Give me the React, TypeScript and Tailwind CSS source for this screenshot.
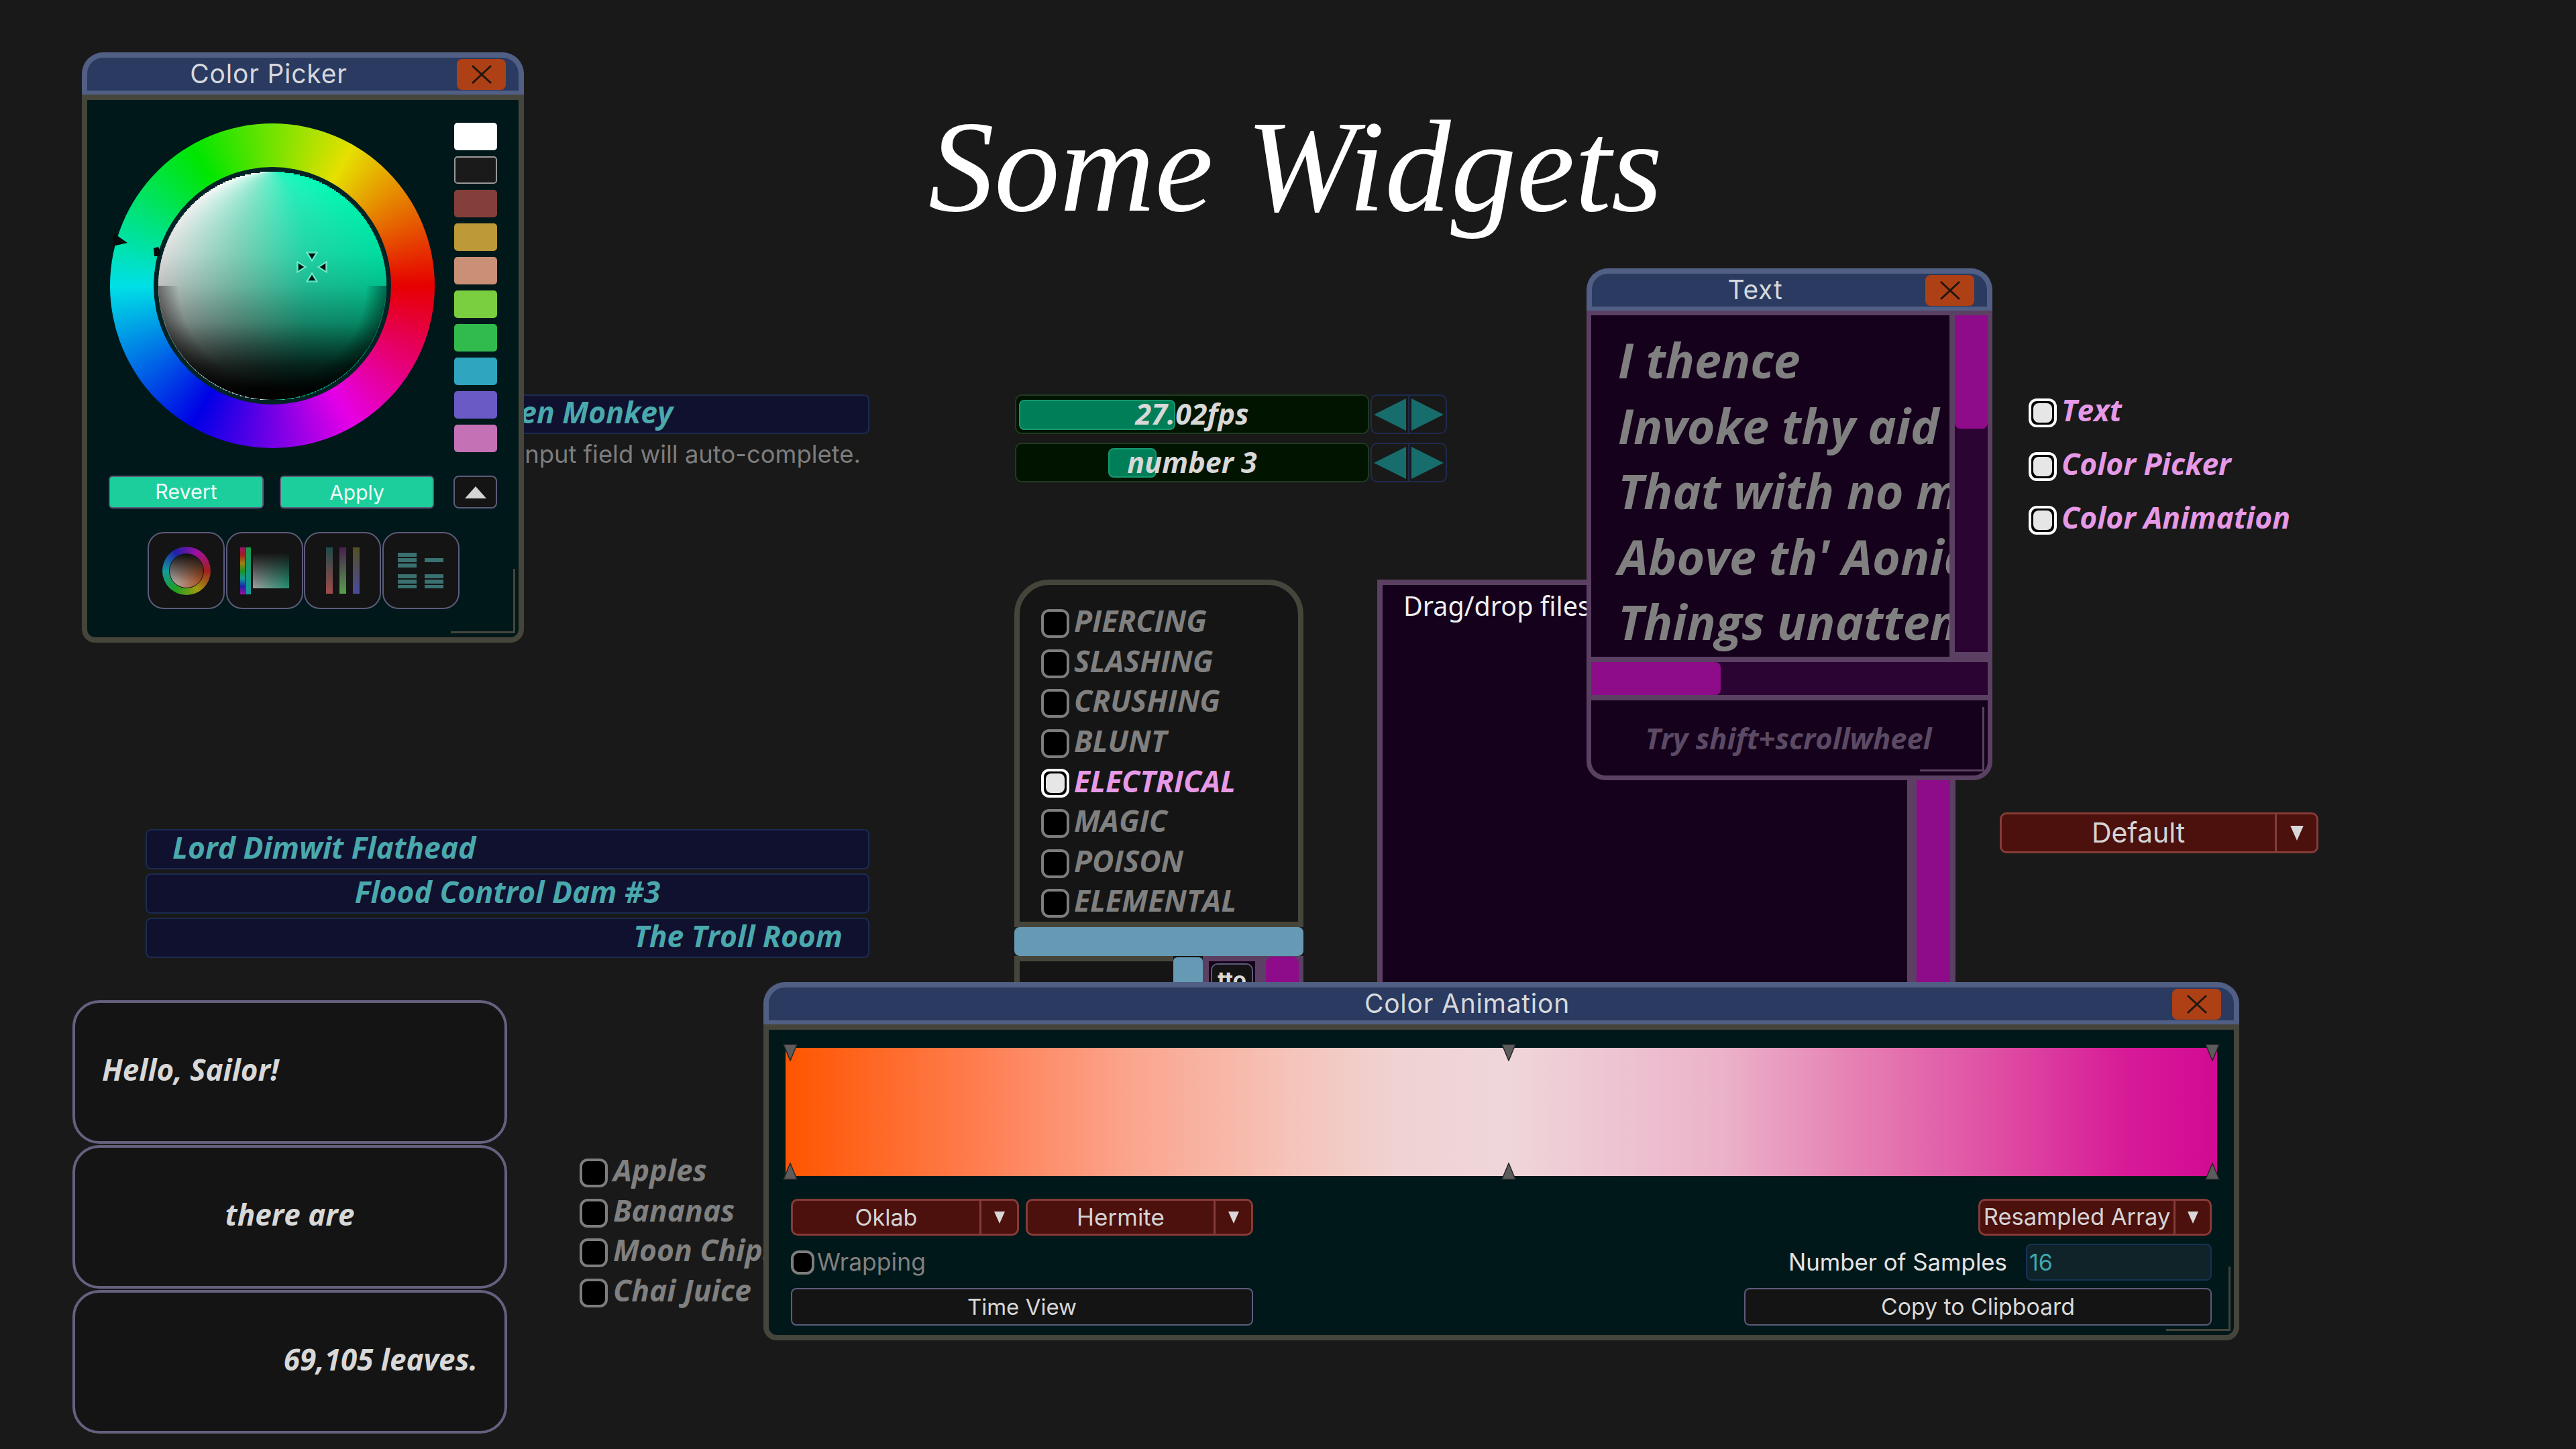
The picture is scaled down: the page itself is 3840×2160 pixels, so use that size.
import React from "react";

const bold = "font-['Open_Sans',sans-serif] font-bold italic";
const ui = "font-['Inter',sans-serif]";

function Close() {
  return (
    <div className="flex h-[46px] w-[73px] shrink-0 items-center justify-center rounded-[8px] bg-[#ae4016]">
      <svg width="32" height="30" viewBox="0 0 32 30">
        <path d="M2 2 L30 28 M30 2 L2 28" stroke="#20160f" strokeWidth="3" fill="none" />
      </svg>
    </div>
  );
}

function TitleBar({ title }: { title: string }) {
  return (
    <div className="flex h-[63px] shrink-0 items-center rounded-t-[32px] border-x-[8px] border-t-[8px] border-b-[6px] border-[#515f85] bg-[#2a3a60] pr-[19px]">
      <div className={`flex-1 pb-[3px] pr-[10px] text-center text-[39px] leading-none tracking-[0.02em] text-[#d6d8dc] ${ui}`}>{title}</div>
      <Close />
    </div>
  );
}

function Grip({ color }: { color: string }) {
  return (
    <>
      <div className="absolute bottom-[6px] right-[5px] h-[96px] w-[3px]" style={{ backgroundColor: color }} />
      <div className="absolute bottom-[6px] right-[5px] h-[3px] w-[96px]" style={{ backgroundColor: color }} />
    </>
  );
}

function Check({ on, small }: { on?: boolean; small?: boolean }) {
  const size = small ? "h-[36px] w-[35px]" : "h-[43px] w-[42px]";
  if (on)
    return (
      <div className={`${size} shrink-0 rounded-[12px] border-[4px] border-white bg-black p-[3px]`}>
        <div className="h-full w-full rounded-[8px] bg-[#e6e6e6]" />
      </div>
    );
  return <div className={`${size} shrink-0 rounded-[12px] border-[4px] border-[#7d7d7d] bg-black`} />;
}

function CheckRow({ label, on, gap }: { label: string; on?: boolean; gap?: string }) {
  return (
    <div className={`flex h-[43px] items-center ${gap ?? "gap-[7px]"}`}>
      <Check on={on} />
      <span className={`whitespace-nowrap pb-[8px] text-[44.4px] leading-none ${bold} ${on ? "text-[#e699e6]" : "text-[#808080]"}`}>{label}</span>
    </div>
  );
}

function Combo({ label, w, sep, size, big }: { label: string; w: string; sep: string; size: string; big?: boolean }) {
  const a = big ? 22 : 18;
  return (
    <div className={`flex h-full items-stretch rounded-[10px] border-[3px] border-[#853c36] bg-[#4c100d] text-[#d4d4d4] ${ui} ${w}`}>
      <div className={`flex flex-1 items-center justify-center whitespace-nowrap ${size} leading-none`}>{label}</div>
      <div className={`flex shrink-0 items-center justify-center border-l-[3px] border-[#853c36] ${sep}`}>
        <svg width={a} height={a} viewBox="0 0 18 18">
          <polygon points="1,0 17,0 9,18" fill="#d8d8d8" />
        </svg>
      </div>
    </div>
  );
}

function Stepper() {
  return (
    <div className="flex h-[59px] w-[114px] rounded-[10px] border-[2px] border-[#1e2b4f]">
      <div className="flex w-[56px] items-center justify-center border-r-[2px] border-[#1e2b4f]">
        <svg width="48" height="48" viewBox="0 0 48 48">
          <polygon points="0,24 48,0 48,48" fill="#176c6c" />
        </svg>
      </div>
      <div className="flex flex-1 items-center justify-center">
        <svg width="48" height="48" viewBox="0 0 48 48">
          <polygon points="48,24 0,0 0,48" fill="#176c6c" />
        </svg>
      </div>
    </div>
  );
}

function Slider({ text, fill }: { text: string; fill: string }) {
  return (
    <div className="flex gap-[2px]">
      <div className="relative flex h-[59px] w-[528px] items-center justify-center rounded-[10px] border-[2px] border-[#203a20] bg-[#001400]">
        <div className={`absolute rounded-[8px] border-[2px] border-[#159870] bg-[#007e58] ${fill}`} />
        <span className={`relative pb-[3px] text-[43px] leading-none text-[#d8d8d8] ${bold}`}>{text}</span>
      </div>
      <Stepper />
    </div>
  );
}

function Handle({ up, cls }: { up?: boolean; cls: string }) {
  return (
    <svg className={`absolute ${cls}`} width="22" height="26" viewBox="0 0 22 26">
      <polygon points={up ? "11,1 21,25 1,25" : "1,1 21,1 11,25"} fill="#5c5c5c" stroke="#262626" strokeWidth="1.5" />
    </svg>
  );
}

function Disc() {
  const r = 170;
  const rows = [];
  for (let y = -r; y < r; y += 2) {
    const w = Math.sqrt(Math.max(0, r * r - (y + 1) * (y + 1)));
    rows.push(<rect key={y} x={r - w} y={y + r} width={2 * w} height={2.5} fill="url(#svh)" />);
  }
  return (
    <svg width={340} height={340} viewBox="0 0 340 340">
      <defs>
        <linearGradient id="svh" x1="0" y1="0" x2="1" y2="0">
          <stop offset="0" stopColor="#ffffff" />
          <stop offset="0.35" stopColor="#8eeed2" />
          <stop offset="0.65" stopColor="#28f5c0" />
          <stop offset="1" stopColor="#00ffb8" />
        </linearGradient>
        <linearGradient id="svv" x1="0" y1="0" x2="0" y2="1">
          <stop offset="0" stopColor="#000" stopOpacity="0" />
          <stop offset="0.36" stopColor="#000" stopOpacity="0.14" />
          <stop offset="0.5" stopColor="#000" stopOpacity="0.25" />
          <stop offset="0.66" stopColor="#000" stopOpacity="0.46" />
          <stop offset="0.755" stopColor="#000" stopOpacity="0.67" />
          <stop offset="0.85" stopColor="#000" stopOpacity="0.86" />
          <stop offset="0.95" stopColor="#000" stopOpacity="0.98" />
          <stop offset="1" stopColor="#000" stopOpacity="1" />
        </linearGradient>
        <radialGradient id="svr" gradientUnits="userSpaceOnUse" cx={r} cy={r} r={r}>
          <stop offset="0.82" stopColor="#000" stopOpacity="0" />
          <stop offset="1" stopColor="#000" stopOpacity="0.45" />
        </radialGradient>
      </defs>
      {rows}
      <circle cx={r} cy={r} r={r} fill="url(#svv)" />
      <path d={`M0 ${r} A${r} ${r} 0 0 0 ${2 * r} ${r} Z`} fill="url(#svr)" />
    </svg>
  );
}

function Wheel() {
  return (
    <div className="relative flex h-[484px] w-[484px] shrink-0 items-center justify-center rounded-full bg-[conic-gradient(from_90deg,#e60000,#e600e6,#0000e6,#00e0e6,#00e600,#e6e000,#e60000)]">
      <div className="flex h-[354px] w-[354px] items-center justify-center rounded-full bg-[#012325]">
        <Disc />
      </div>
      <svg className="absolute left-0 top-0" width="484" height="484" viewBox="0 0 484 484">
        <polygon points="6,164 26,178 4,183" fill="#0a0a0a" />
        <polygon points="65,186 72,184 75,190 74,198 66,198" fill="#0a0a0a" />
        <g transform="translate(301 214)">
          {[0, 90, 180, 270].map((a) => (
            <g key={a} transform={`rotate(${a})`}>
              <polygon points="-8,-22 8,-22 0,-9" fill="#15c99c" stroke="#a6f0dc" strokeWidth="1.2" />
              <polygon points="-5,-20 5,-20 0,-12" fill="#0a0a0a" />
            </g>
          ))}
        </g>
      </svg>
    </div>
  );
}

function Tab({ children }: { children: React.ReactNode }) {
  return <div className="flex h-[115px] w-[115px] items-center justify-center rounded-[24px] border-[2px] border-[#5c5b7b] bg-[#141414]">{children}</div>;
}

const swatches = [
  "bg-white",
  "bg-[#1a1a1a] border-[2px] border-[#999999]",
  "bg-[#853f3a]",
  "bg-[#bd9937]",
  "bg-[#c98f77]",
  "bg-[#79cf3f]",
  "bg-[#30bb4c]",
  "bg-[#2fa5bf]",
  "bg-[#6a5ac5]",
  "bg-[#c471b5]",
];

function ColorPicker() {
  return (
    <div className="absolute left-[122px] top-[78px] flex h-[880px] w-[659px] flex-col">
      <TitleBar title="Color Picker" />
      <div className="relative flex-1 rounded-b-[20px] border-[8px] border-[#45453b] bg-[#00181a] pl-[34px] pt-[35px]">
        <div className="flex gap-[29px]">
          <Wheel />
          <div className="-mt-[1px] flex flex-col gap-[9px]">
            {swatches.map((s, i) => (
              <div key={i} className={`h-[41px] w-[64px] rounded-[5px] ${s}`} />
            ))}
          </div>
        </div>
        <div className="mt-[35px] flex h-[49px] items-stretch">
          <div className={`-ml-[2px] flex w-[231px] items-center justify-center rounded-[6px] border-[2px] border-[#5c5b7b] bg-[#1bce9c] text-[30.5px] leading-none text-[#eefcf6] ${ui}`}>Revert</div>
          <div className={`ml-[24px] flex w-[230px] items-center justify-center rounded-[6px] border-[2px] border-[#5c5b7b] bg-[#1bce9c] text-[30px] leading-none text-[#eefcf6] ${ui}`}>Apply</div>
          <div className="ml-[29px] flex w-[65px] items-center justify-center rounded-[8px] border-[2px] border-[#5c5b7b] bg-[#141414]">
            <svg width="34" height="20" viewBox="0 0 34 20">
              <polygon points="17,1 33,19 1,19" fill="#d4d4d4" />
            </svg>
          </div>
        </div>
        <div className="ml-[56px] mt-[35px] flex gap-[1.5px]">
          <Tab>
            <div className="flex h-[72px] w-[72px] items-center justify-center rounded-full bg-[conic-gradient(from_90deg,#a02020,#a09a10,#20a020,#109a9a,#2020a8,#a010a0,#a02020)]">
              <div className="h-[52px] w-[52px] rounded-full border-[1px] border-[#111111] bg-[linear-gradient(to_bottom,#111111,transparent_85%),linear-gradient(to_right,#b0b0b0,#a8481a)]" />
            </div>
          </Tab>
          <Tab>
            <div className="flex h-[70px] w-[73px] items-center gap-[1px]">
              <div className="h-full w-[8px] bg-[linear-gradient(to_bottom,#a0106a,#a02020,#a08010,#209020,#109a9a,#2020a8,#a010a0)]" />
              <div className="h-full w-[8px] bg-[linear-gradient(to_bottom,#1a9a4a,#109aa0)]" />
              <div className="ml-[2px] h-[53px] w-[54px] bg-[linear-gradient(to_bottom,#141414,transparent),linear-gradient(to_right,#a0a0a0,#1f8f70)]" />
            </div>
          </Tab>
          <Tab>
            <div className="flex h-[69px] gap-[10px]">
              <div className="h-full w-[10px] bg-[linear-gradient(to_bottom,#1f4a4a,#a04a4a)]" />
              <div className="h-full w-[10px] bg-[linear-gradient(to_bottom,#4a1f50,#55a04a)]" />
              <div className="h-full w-[10px] bg-[linear-gradient(to_bottom,#55501f,#4a4aa0)]" />
            </div>
          </Tab>
          <Tab>
            <div className="grid w-[68px] grid-cols-[28px_28px] justify-between gap-y-[10px]">
              <div className="flex flex-col gap-[2px]">
                <div className="h-[6px] bg-[#3a7070]" />
                <div className="h-[6px] bg-[#3a7070]" />
                <div className="h-[6px] bg-[#3a7070]" />
              </div>
              <div className="flex flex-col justify-center">
                <div className="h-[6px] bg-[#3a7070]" />
              </div>
              <div className="flex flex-col gap-[2px]">
                <div className="h-[6px] bg-[#3a7070]" />
                <div className="h-[6px] bg-[#3a7070]" />
                <div className="h-[5px] bg-[#3a7070]" />
              </div>
              <div className="flex flex-col gap-[2px]">
                <div className="h-[6px] bg-[#3a7070]" />
                <div className="h-[6px] bg-[#3a7070]" />
                <div className="h-[5px] bg-[#3a7070]" />
              </div>
            </div>
          </Tab>
        </div>
        <Grip color="#45453b" />
      </div>
    </div>
  );
}

const poem = [
  "I thence",
  "Invoke thy aid to my adventurous song,",
  "That with no middle flight intends to soar",
  "Above th' Aonian mount, while it pursues",
  "Things unattempted yet in prose or rhyme.",
];

function TextWindow() {
  return (
    <div className="absolute left-[2365px] top-[400px] flex h-[763px] w-[605px] flex-col">
      <TitleBar title="Text" />
      <div className="relative flex flex-1 flex-col rounded-b-[28px] border-[7px] border-[#5b4063] bg-[#15011c]">
        <div className="flex h-[509px] shrink-0">
          <div className={`flex-1 overflow-hidden pl-[40px] pt-[18px] text-[71.6px] leading-[97.6px] text-[#808080] ${bold}`}>
            {poem.map((l) => (
              <div key={l} className="whitespace-nowrap">{l}</div>
            ))}
          </div>
          <div className="flex w-[57px] shrink-0 flex-col border-l-[8px] border-[#5b4063] bg-[#2b0433]">
            <div className="h-[169px] rounded-b-[8px] bg-[#8e0b8a]" />
            <div className="flex-1" />
            <div className="h-[7px] bg-[#5b4063]" />
          </div>
        </div>
        <div className="h-[65px] shrink-0 border-y-[8px] border-[#5b4063] bg-[#2b0433]">
          <div className="h-full w-[193px] rounded-r-[8px] bg-[#8e0b8a]" />
        </div>
        <div className={`flex flex-1 items-center justify-center pr-[3px] pt-[2px] text-[43.5px] leading-none text-[#5c4a65] ${bold}`}>Try shift+scrollwheel</div>
        <Grip color="#5b4063" />
      </div>
    </div>
  );
}

function ColorAnimation() {
  return (
    <div className="absolute left-[1138px] top-[1464px] flex h-[534px] w-[2200px] flex-col">
      <TitleBar title="Color Animation" />
      <div className="relative flex-1 rounded-b-[20px] border-[8px] border-[#45453b] bg-[#00181a] px-[25px] pt-[27px]">
        <div className="relative h-[191px] w-full bg-[linear-gradient(to_right,#ff5500_0%,#ff7c4e_13%,#fba58e_24.2%,#f5c4ba_35.4%,#efd3d3_42.9%,#efd6da_50.5%,#ebb2c9_65.5%,#e67fb3_74.9%,#df50a3_84.3%,#d71a97_93.7%,#d30a94_100%)]">
          <Handle cls="left-[-4px] top-[-6px]" />
          <Handle cls="left-[1067px] top-[-6px]" />
          <Handle cls="left-[2116px] top-[-6px]" />
          <Handle up cls="left-[-4px] top-[171px]" />
          <Handle up cls="left-[1067px] top-[171px]" />
          <Handle up cls="left-[2116px] top-[171px]" />
        </div>
        <div className="mt-[34px] flex h-[55px] justify-between px-[8px]">
          <div className="flex gap-[10px]">
            <Combo label="Oklab" w="w-[340px]" sep="w-[56px]" size="text-[34px]" />
            <Combo label="Hermite" w="w-[339px]" sep="w-[56px]" size="text-[35px]" />
          </div>
          <Combo label="Resampled Array" w="w-[348px]" sep="w-[54px]" size="text-[34.5px]" />
        </div>
        <div className="mt-[12px] flex h-[55px] items-center justify-between px-[8px]">
          <div className="flex items-center gap-[4px]">
            <Check small />
            <span className={`text-[35.5px] leading-none text-[#808080] ${ui}`}>Wrapping</span>
          </div>
          <div className="flex h-full items-center gap-[28px]">
            <span className={`text-[34.8px] leading-none text-[#e4e4e4] ${ui}`}>Number of Samples</span>
            <div className={`flex h-full w-[277px] items-center rounded-[8px] border-[2px] border-[#163355] bg-[#0f2328] pl-[3px] text-[34px] leading-none text-[#3fa8ad] ${ui}`}>16</div>
          </div>
        </div>
        <div className="mt-[11px] flex h-[56px] justify-between px-[8px]">
          <div className={`flex w-[689px] items-center justify-center rounded-[8px] border-[2px] border-[#5c5b7b] bg-[#141414] text-[33px] leading-none text-[#d8d8d8] ${ui}`}>Time View</div>
          <div className={`flex w-[697px] items-center justify-center rounded-[8px] border-[2px] border-[#5c5b7b] bg-[#141414] text-[33.8px] leading-none text-[#d8d8d8] ${ui}`}>Copy to Clipboard</div>
        </div>
        <Grip color="#45453b" />
      </div>
    </div>
  );
}

function Bar({ text, align }: { text: string; align: string }) {
  return (
    <div className={`flex h-[60px] items-center rounded-[8px] border-[2px] border-[#1c2b50] bg-[#10112f] px-[38px] text-[44.4px] leading-none text-[#4aa9ad] ${bold} ${align}`}>
      <span className="whitespace-nowrap pb-[6px]">{text}</span>
    </div>
  );
}

function Bubble({ text, align }: { text: string; align: string }) {
  return (
    <div className={`flex h-[214px] items-center rounded-[40px] border-[4px] border-[#66607f] bg-[#141414] px-[40px] text-[44px] leading-none text-[#d8d8d8] ${bold} ${align}`}>
      <span className="whitespace-nowrap pb-[8px]">{text}</span>
    </div>
  );
}

export default function App() {
  return (
    <div className="relative h-[2160px] w-[3840px] overflow-hidden bg-[#191919]">
      <div className="absolute left-[1384px] top-[130px] whitespace-nowrap font-['Liberation_Serif',cursive] text-[196px] italic leading-[1.2] text-white">Some Widgets</div>

      <div className="absolute left-[217px] top-[588px] w-[1079px]">
        <div className={`flex h-[59px] items-center rounded-[8px] border-[2px] border-[#1c2b50] bg-[#10112f] pb-[6px] pl-[460px] text-[44.4px] leading-none text-[#4aa9ad] ${bold}`}>Golden Monkey</div>
        <div className={`mt-[10px] pr-[13px] text-right text-[36.4px] leading-[40px] text-[#7d7d7d] ${ui}`}>This input field will auto-complete.</div>
      </div>

      <div className="absolute left-[217px] top-[1236px] flex w-[1079px] flex-col gap-[6px]">
        <Bar text="Lord Dimwit Flathead" align="justify-start" />
        <Bar text="Flood Control Dam #3" align="justify-center" />
        <Bar text="The Troll Room" align="justify-end" />
      </div>

      <div className="absolute left-[1513px] top-[588px] flex flex-col gap-[13px]">
        <Slider text="27.02fps" fill="left-[4px] top-[6px] h-[45px] w-[233px]" />
        <Slider text="number 3" fill="left-[137px] top-[6px] h-[44px] w-[72px]" />
      </div>

      <div className="absolute left-[1512px] top-[864px] flex w-[431px] flex-col">
        <div className="flex h-[518px] flex-col gap-[16.6px] rounded-t-[52px] border-[8px] border-[#45453b] bg-[#151515] pl-[32px] pt-[36px]">
          {["PIERCING", "SLASHING", "CRUSHING", "BLUNT", "ELECTRICAL", "MAGIC", "POISON", "ELEMENTAL"].map((l) => (
            <CheckRow key={l} label={l} on={l === "ELECTRICAL"} />
          ))}
        </div>
        <div className="h-[43px] rounded-[8px] bg-[#6699b3]" />
        <div className="flex h-[60px] overflow-hidden">
          <div className="w-[237px] border-l-[8px] border-t-[8px] border-[#45453b] bg-[#151515]" />
          <div className="mt-[2px] w-[44px] rounded-t-[6px] bg-[#6699b3]" />
          <div className="w-[87px] border-x-[9px] border-t-[8px] border-[#5b4063] bg-[#15011c] px-[3px] pt-[3px]">
            <div className="flex h-[60px] justify-center rounded-[10px] border-[2px] border-[#5c5b7b] bg-[#141414] pt-[6px] font-['Inter',sans-serif] text-[33px] font-bold leading-none text-[#d8d8d8]">tto</div>
          </div>
          <div className="w-[63px] bg-[#5b4063] px-[7px] pt-[1px]">
            <div className="h-full rounded-t-[10px] bg-[#8e0b8a]" />
          </div>
        </div>
      </div>

      <div className="absolute left-[2053px] top-[864px] flex h-[640px] w-[862px] border-[8px] border-[#5b4063] bg-[#15011c]">
        <div className="flex-1 pl-[31px] pt-[6px] font-['Noto_Sans',sans-serif] text-[39.5px] leading-[50px] text-[#eeeeee]">Drag/drop files here</div>
        <div className="w-[14px] bg-[#5b4063]" />
        <div className="w-[50px] self-stretch bg-[#8e0b8a]" />
      </div>

      <div className="absolute left-[3024px] top-[594px] flex flex-col gap-[37px]">
        {["Text", "Color Picker", "Color Animation"].map((l) => (
          <CheckRow key={l} label={l} on />
        ))}
      </div>

      <div className="absolute left-[2981px] top-[1211px] h-[61px] w-[475px]">
        <Combo label="Default" w="w-full" sep="w-[62px]" size="text-[41px]" big />
      </div>

      <div className="absolute left-[108px] top-[1491px] flex w-[648px] flex-col gap-[2px]">
        <Bubble text="Hello, Sailor!" align="justify-start" />
        <Bubble text="there are" align="justify-center" />
        <Bubble text="69,105 leaves." align="justify-end" />
      </div>

      <div className="absolute left-[864px] top-[1727px] flex flex-col gap-[16.6px]">
        {["Apples", "Bananas", "Moon Chips", "Chai Juice"].map((l) => (
          <CheckRow key={l} label={l} gap="gap-[8px]" />
        ))}
      </div>

      <ColorAnimation />
      <TextWindow />
      <ColorPicker />
    </div>
  );
}
